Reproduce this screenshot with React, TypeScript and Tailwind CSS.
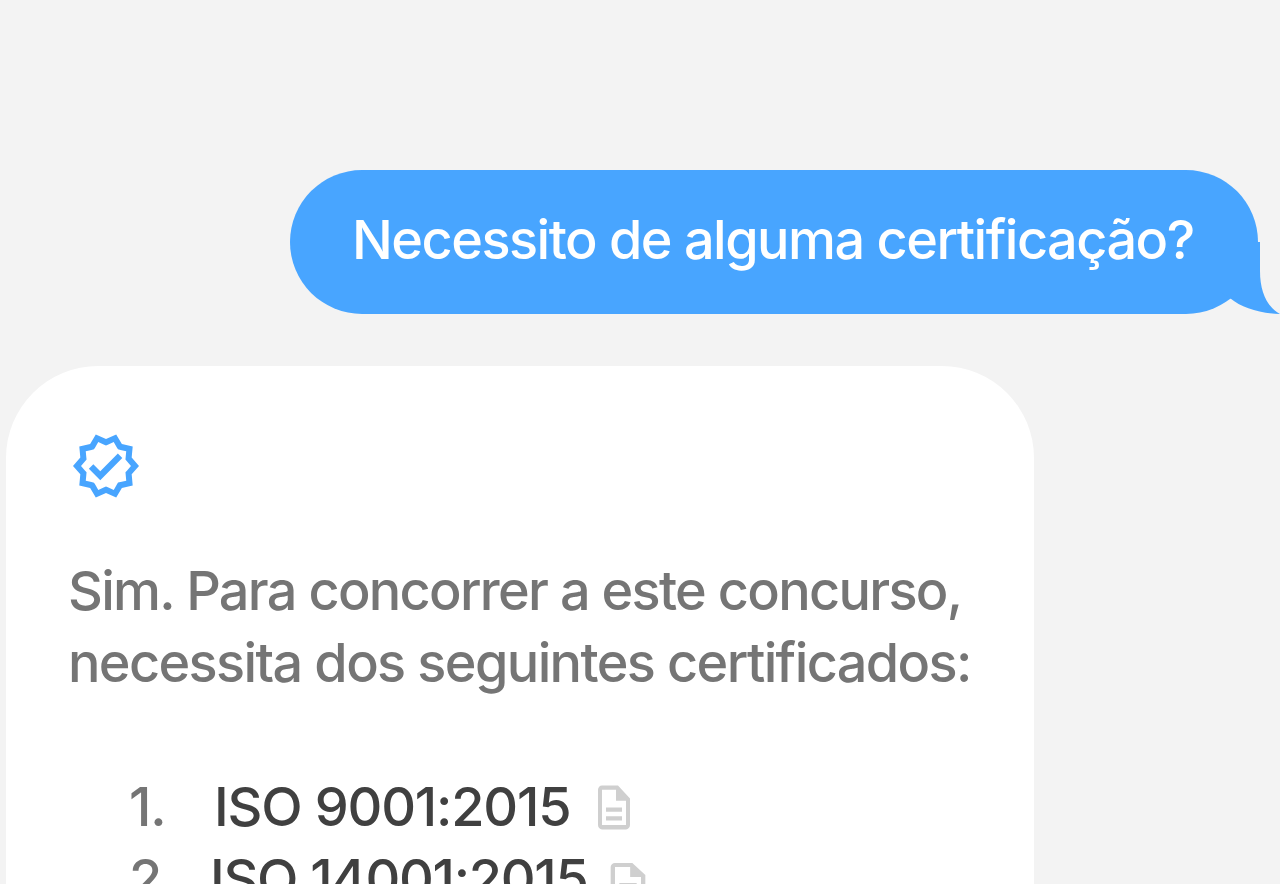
import React from "react";
import { clsx } from "clsx";
import { MdOutlineVerified } from "react-icons/md";

const certificates = [
  {
    number: "1.",
    name: "ISO 9001:2015",
    nameClass: "ml-[49px] w-[358px] tracking-[-0.022em]",
    iconClass: "ml-[18px] mt-[10px] h-[52.8px] w-[48px]",
  },
  {
    number: "2.",
    name: "ISO 14001:2015",
    nameClass: "ml-[45px] w-[378px] tracking-[-0.024em]",
    iconClass: "ml-[14px] mt-[16px] h-[48px] w-[52px]",
  },
];

const DocumentIcon = ({ className }: { className?: string }) => (
  <svg
    viewBox="0 0 24 24"
    preserveAspectRatio="none"
    fill="currentColor"
    className={clsx("shrink-0 text-[#cfcfcf]", className)}
  >
    <path d="M8 16h8v2H8zm0-4h8v2H8zm6-10H6c-1.1 0-2 .9-2 2v16c0 1.1.89 2 1.99 2H18c1.1 0 2-.9 2-2V8l-6-6zm4 18H6V4h7v5h5v11z" />
  </svg>
);

const Question = ({ text }: { text: string }) => (
  <div className="relative ml-[290px] h-36 w-[968px] shrink-0 rounded-full bg-[#48a5ff] pl-[62px] pt-[34px]">
    <p className="whitespace-nowrap font-medium tracking-[-0.028em] text-white">
      {text}
    </p>
    <svg
      viewBox="0 0 60 72"
      className="absolute -right-[22px] top-[72px] h-[72px] w-[60px] text-[#48a5ff]"
      fill="currentColor"
    >
      <path d="M0 0H40V29C40 49 46.500 64.500 60 72C39.500 71.500 21.500 65.500 10.500 56.500L0 50Z" />
    </svg>
  </div>
);

const Answer = () => (
  <div className="ml-[6px] mt-[52px] h-[620px] w-[1028px] shrink-0 rounded-t-[92px] bg-white pl-16 pt-16 font-[450] text-[#757575]">
    <MdOutlineVerified className="size-[72px] text-[#48a5ff]" />
    <p className="-ml-[2px] mt-[53px] whitespace-nowrap">
      <span className="block tracking-[-0.0315em]">
        Sim. Para concorrer a este concurso,
      </span>
      <span className="block tracking-[-0.03em]">
        necessita dos seguintes certificados:
      </span>
    </p>
    <ol className="mt-[72px] pl-[59px]">
      {certificates.map((item) => (
        <li key={item.name} className="flex h-[72px] items-start whitespace-nowrap">
          <span className="w-[36px] tracking-[-0.02em]">{item.number}</span>
          <span className={clsx("shrink-0 text-[#404040]", item.nameClass)}>
            {item.name}
          </span>
          <DocumentIcon className={item.iconClass} />
        </li>
      ))}
    </ol>
  </div>
);

const App = () => {
  return (
    <main className="flex h-[884px] w-[1280px] flex-col overflow-hidden bg-[#f3f3f3] pt-[170px] font-['Inter',sans-serif] text-[54px] leading-[72px]">
      <Question text="Necessito de alguma certificação?" />
      <Answer />
    </main>
  );
};

export default App;
